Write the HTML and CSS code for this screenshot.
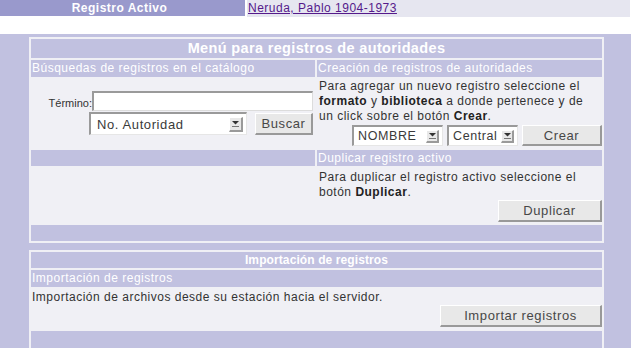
FILE: index.html
```html
<!DOCTYPE html>
<html lang="es">
<head>
<meta charset="utf-8">
<title>Menú para registros de autoridades</title>
<link rel="stylesheet" href="styles.css">
</head>
<body>
<div class="topbar">
  <div class="top-label">Registro Activo</div>
  <div class="top-value"><a href="#">Neruda, Pablo 1904-1973</a></div>
</div>
<div class="main">
  <section class="panel panel-menu">
    <div class="title span2">Menú para registros de autoridades</div>
    <div class="sub">Búsquedas de registros en el catálogo</div>
    <div class="sub">Creación de registros de autoridades</div>
    <div class="cell search">
      <div class="frow">
        <label class="lbl">Término:</label>
        <input class="field" type="text">
      </div>
      <div class="frow gap8">
        <span class="select sel-wide"><span class="sel-text">No. Autoridad</span><span class="sel-arrow"><svg width="7" height="6" viewBox="0 0 7 6"><path d="M0 0h7L3.5 3.5z" fill="#333"/><path d="M0 5.5h7" stroke="#777" stroke-width="1"/></svg></span></span>
        <button class="btn btn-buscar">Buscar</button>
      </div>
    </div>
    <div class="cell text crea">
      <p>Para agregar un nuevo registro seleccione el<br><b>formato</b> y <b>biblioteca</b> a donde pertenece y de<br>un click sobre el botón <b>Crear</b>.</p>
      <div class="actions">
        <span class="select sel-nombre"><span class="sel-text">NOMBRE</span><span class="sel-arrow"><svg width="7" height="6" viewBox="0 0 7 6"><path d="M0 0h7L3.5 3.5z" fill="#333"/><path d="M0 5.5h7" stroke="#777" stroke-width="1"/></svg></span></span>
        <span class="select sel-central"><span class="sel-text">Central</span><span class="sel-arrow"><svg width="7" height="6" viewBox="0 0 7 6"><path d="M0 0h7L3.5 3.5z" fill="#333"/><path d="M0 5.5h7" stroke="#777" stroke-width="1"/></svg></span></span>
        <button class="btn btn-crear">Crear</button>
      </div>
    </div>
    <div class="sub sub16"></div>
    <div class="sub sub16">Duplicar registro activo</div>
    <div class="cell"></div>
    <div class="cell text dup">
      <p>Para duplicar el registro activo seleccione el<br>botón <b>Duplicar</b>.</p>
      <div class="actions">
        <button class="btn btn-dup">Duplicar</button>
      </div>
    </div>
    <div class="sub span2 foot"></div>
  </section>

  <section class="panel panel-import">
    <div class="title small">Importación de registros</div>
    <div class="sub sub-imp">Importación de registros</div>
    <div class="cell text imp">
      <p>Importación de archivos desde su estación hacia el servidor.</p>
      <div class="actions">
        <button class="btn btn-imp">Importar registros</button>
      </div>
    </div>
    <div class="sub foot2"></div>
  </section>
</div>
</body>
</html>
```
FILE: styles.css
```css
html, body {
  margin: 0;
  padding: 0;
  background: #ffffff;
}
body {
  font-family: "Liberation Sans", Arial, Helvetica, sans-serif;
  font-size: 12px;
  color: #333333;
  letter-spacing: 0.5px;
  width: 631px;
  height: 348px;
  overflow: hidden;
}
.topbar {
  display: grid;
  grid-template-columns: 245px 383px;
  column-gap: 2px;
  height: 17px;
}
.top-label {
  background: #9999cc;
  color: #ffffff;
  font-weight: bold;
  text-align: center;
  line-height: 16px;
  height: 16px;
  padding-right: 6px;
}
.top-value {
  background: #e6e6f0;
  line-height: 16px;
  height: 17px;
  padding-left: 1px;
}
.top-value a {
  color: #551a8b;
}
.main {
  margin-top: 17px;
  background: #c1c1e0;
  padding: 3px 27px 40px 29px;
}
.panel {
  background: #f0f0f5;
  padding: 2px;
  display: grid;
  gap: 2px;
}
.panel-menu {
  grid-template-columns: 284px 285px;
}
.panel-import {
  grid-template-columns: 571px;
  margin-top: 7px;
}
.span2 {
  grid-column: 1 / span 2;
}
.title {
  background: #c1c1e0;
  color: #ffffff;
  font-weight: bold;
  font-size: 14.5px;
  letter-spacing: 0.35px;
  text-align: center;
  height: 19px;
  line-height: 19px;
}
.title.small {
  font-size: 12px;
  letter-spacing: 0.1px;
  height: 16px;
  line-height: 16px;
}
.sub {
  background: #c1c1e0;
  color: #ffffff;
  height: 17px;
  line-height: 17px;
  padding-left: 1px;
}
.sub16 {
  height: 16px;
  line-height: 16px;
}
.sub-imp {
  height: 17px;
}
.foot {
  height: 16px;
}
.search {
  display: flex;
  flex-direction: column;
  align-items: flex-end;
  padding: 12px 2px 0 0;
  gap: 1px;
}
.frow {
  display: flex;
  align-items: center;
}
.gap8 {
  gap: 8px;
}
.lbl {
  font-size: 11px;
  letter-spacing: 0;
  color: #333;
  padding-top: 4px;
}
.field {
  box-sizing: border-box;
  width: 221px;
  height: 20px;
  margin: 0;
  background: #ffffff;
  border-style: solid;
  border-width: 2px 1px 1px 2px;
  border-color: #9a9a9a #dcdcdc #dcdcdc #9a9a9a;
  padding: 0;
}
.select {
  box-sizing: border-box;
  display: flex;
  align-items: center;
  height: 21px;
  background: #ffffff;
  border-style: solid;
  border-width: 2px 1px 1px 2px;
  border-color: #9a9a9a #e6e6e6 #e6e6e6 #9a9a9a;
  font-size: 12.5px;
  letter-spacing: 0.6px;
  color: #3a3a3a;
}
.sel-text {
  flex: 1;
  padding-left: 4px;
  white-space: nowrap;
  overflow: hidden;
}
.sel-arrow {
  box-sizing: border-box;
  width: 13px;
  height: 13px;
  margin-right: 3px;
  background: #e8e8e8;
  border-style: solid;
  border-width: 1px 2px 2px 1px;
  border-color: #ffffff #9a9a9a #9a9a9a #ffffff;
  display: flex;
  align-items: center;
  justify-content: center;
}
.sel-wide {
  width: 158px;
  height: 23px;
  font-size: 13px;
}
.sel-wide .sel-text {
  padding-left: 6px;
}
.sel-wide .sel-arrow {
  width: 14px;
  height: 15px;
}
.sel-nombre {
  width: 91px;
}
.sel-central {
  width: 71px;
}
.btn {
  box-sizing: border-box;
  height: 21px;
  margin: 0;
  padding: 0;
  font-family: "Liberation Sans", Arial, Helvetica, sans-serif;
  font-size: 13px;
  letter-spacing: 0.6px;
  color: #474747;
  background: #e8e8e8;
  border-style: solid;
  border-width: 1px 2px 2px 1px;
  border-color: #ffffff #999999 #999999 #ffffff;
}
.btn-buscar {
  width: 58px;
  height: 22px;
}
.btn-crear {
  width: 80px;
}
.btn-dup {
  width: 104px;
  height: 22px;
}
.btn-imp {
  width: 162px;
  height: 22px;
}
.text {
  padding: 0 2px 2px 2px;
}
.text p {
  margin: 0;
  line-height: 15px;
}
.text b {
  color: #222;
}
.actions {
  display: flex;
  justify-content: flex-end;
  gap: 4px;
  margin-top: 1px;
  margin-right: -2px;
}
.dup {
  padding-top: 2px;
  padding-bottom: 1px;
}
.dup .actions {
  margin-top: 0;
}
.imp {
  padding-top: 1px;
  padding-left: 1px;
  padding-bottom: 2px;
}
.imp .actions {
  margin-top: 0;
}
.foot2 {
  height: 30px;
}
```
